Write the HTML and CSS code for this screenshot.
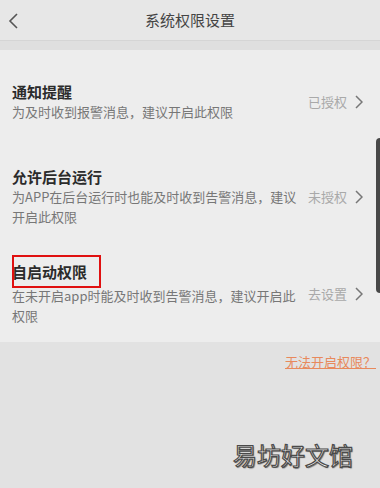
FILE: index.html
```html
<!DOCTYPE html>
<html lang="zh-CN">
<head>
    <meta charset="UTF-8">
    <meta name="viewport" content="width=device-width, initial-scale=1.0">
    <title>系统权限设置</title>
    <link rel="stylesheet" href="styles.css">
</head>
<body>

<div class="header">
    <span class="back">
        <svg width="10" height="16" viewBox="0 0 10 16"><polyline points="9,1 2,8 9,15" fill="none" stroke="#555" stroke-width="1.6"/></svg>
    </span>
    <span class="header-title">系统权限设置</span>
</div>
<div class="band"></div>

<div class="card">
    <div class="row row-first">
        <div class="row-text">
            <div class="row-title">通知提醒</div>
            <div class="row-sub">为及时收到报警消息，建议开启此权限</div>
        </div>
        <div class="row-meta">
            <span class="row-state">已授权</span>
            <svg class="chevron" width="8" height="14" viewBox="0 0 8 14"><polyline points="1,1 7,7 1,13" fill="none" stroke="#777" stroke-width="1.5"/></svg>
        </div>
    </div>

    <div class="row row-second">
        <div class="row-text">
            <div class="row-title">允许后台运行</div>
            <div class="row-sub">为APP在后台运行时也能及时收到告警消息，建议开启此权限</div>
        </div>
        <div class="row-meta">
            <span class="row-state">未授权</span>
            <svg class="chevron" width="8" height="14" viewBox="0 0 8 14"><polyline points="1,1 7,7 1,13" fill="none" stroke="#777" stroke-width="1.5"/></svg>
        </div>
    </div>

    <div class="row row-third">
        <div class="row-text">
            <div class="row-title marked">自启动权限<span class="mark"></span></div>
            <div class="row-sub sub-gap">在未开启app时能及时收到告警消息，建议开启此权限</div>
        </div>
        <div class="row-meta">
            <span class="row-state">去设置</span>
            <svg class="chevron" width="8" height="14" viewBox="0 0 8 14"><polyline points="1,1 7,7 1,13" fill="none" stroke="#777" stroke-width="1.5"/></svg>
        </div>
    </div>
</div>

<div class="help">
    <a class="help-link" href="#">无法开启权限？</a>
</div>

<div class="scrollbar"></div>
<div class="watermark">易坊好文馆</div>

</body>
</html>
```

FILE: styles.css
```css
body {
    font-family: "Noto Sans CJK SC", "Noto Sans", sans-serif;
    margin: 0;
    height: 488px;
    overflow: hidden;
    background-color: #e2e2e2;
    position: relative;
}
.header {
    height: 40px;
    background-color: #e7e7e7;
    border-bottom: 1px solid #d5d5d5;
    display: flex;
    align-items: center;
    justify-content: center;
    position: relative;
}
.back {
    position: absolute;
    left: 8px;
    top: 13px;
    display: flex;
}
.header-title {
    font-size: 15px;
    color: #444;
    line-height: 20px;
}
.band {
    height: 9px;
    background-color: #dfdfdf;
}
.card {
    background-color: #ededed;
    padding: 32px 0 16px;
}
.row {
    display: flex;
    align-items: center;
    padding: 0 17px 0 12px;
}
.row-second {
    margin-top: 45px;
}
.row-third {
    margin-top: 35px;
}
.row-text {
    flex: 1;
}
.row-title {
    font-size: 15px;
    font-weight: bold;
    color: #2b2b2b;
    line-height: 20px;
}
.marked {
    position: relative;
}
.mark {
    position: absolute;
    left: 0;
    top: -7px;
    width: 85px;
    height: 29px;
    border: 2px solid #e01010;
}
.row-sub {
    font-size: 13px;
    color: #777;
    line-height: 20px;
}
.sub-gap {
    margin-top: 4px;
}
.row-meta {
    display: flex;
    align-items: center;
    gap: 8px;
    margin-left: 6px;
}
.row-state {
    font-size: 13px;
    color: #a9a9a9;
    line-height: 20px;
}
.chevron {
    display: block;
}
.help {
    display: flex;
    justify-content: flex-end;
    padding: 11px 4px 0 0;
}
.help-link {
    font-size: 13px;
    line-height: 18px;
    color: #e8895c;
    text-decoration: underline;
}
.scrollbar {
    position: absolute;
    right: 0;
    top: 138px;
    width: 4px;
    height: 155px;
    background-color: #484848;
    border-radius: 4px 0 0 4px;
}
.watermark {
    position: absolute;
    left: 233px;
    top: 440px;
    font-size: 24px;
    line-height: 30px;
    color: #fff;
    -webkit-text-stroke: 1.2px #4a4a4a;
    text-shadow: 1px 1px 1px rgba(0, 0, 0, 0.5);
}
```
